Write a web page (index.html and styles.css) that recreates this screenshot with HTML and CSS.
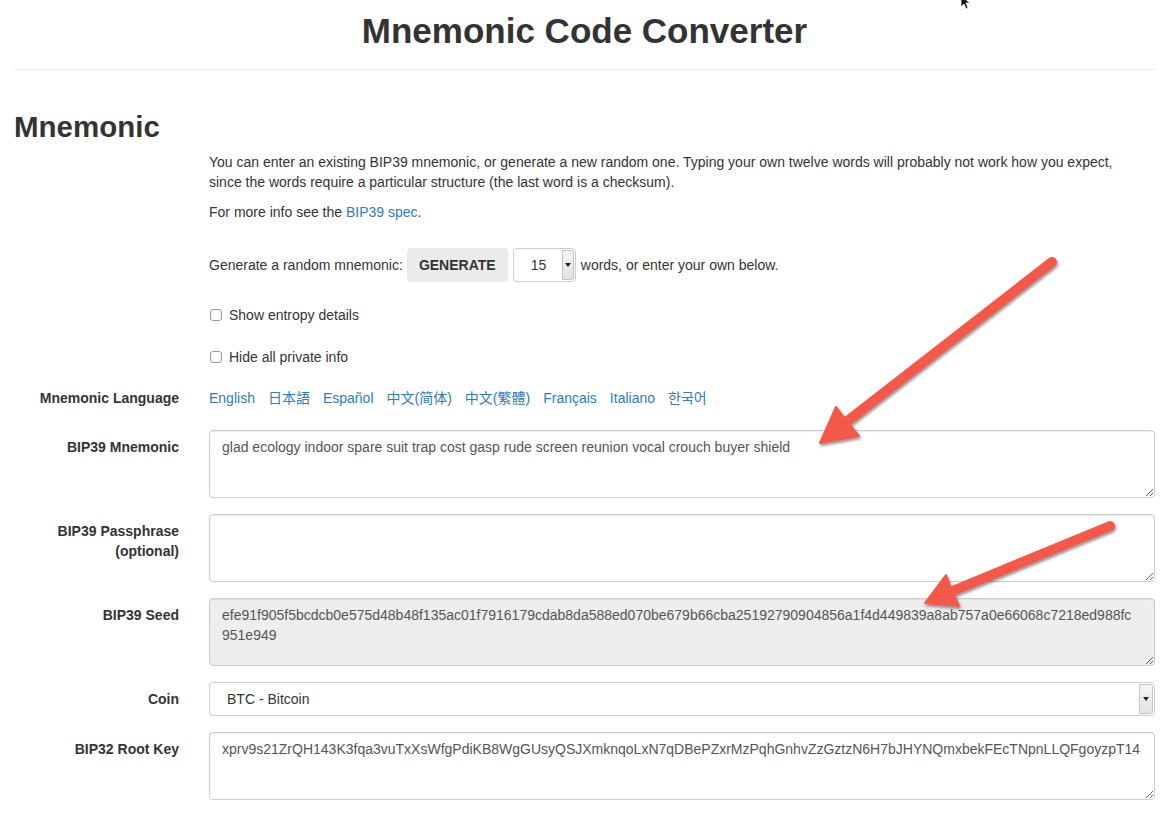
FILE: index.html
```html
<!DOCTYPE html>
<html lang="en">
<head>
<meta charset="utf-8">
<title>Mnemonic Code Converter</title>
<link rel="stylesheet" href="styles.css">
</head>
<body>
<div class="page">
  <h1 class="title">Mnemonic Code Converter</h1>
  <hr class="rule">
  <h2 class="section">Mnemonic</h2>

  <div class="form">
    <div class="row intro">
      <div></div>
      <div>
        <p class="p1">You can enter an existing BIP39 mnemonic, or generate a new random one. Typing your own twelve words will probably not work how you expect,<br>since the words require a particular structure (the last word is a checksum).</p>
        <p class="p2">For more info see the <a href="#">BIP39 spec</a>.</p>
      </div>
    </div>

    <div class="row gen-row">
      <div></div>
      <div class="gen">
        <span>Generate a random mnemonic:</span>
        <span class="btn">GENERATE</span>
        <span class="num-select"><span class="num-val">15</span><span class="drop"><span class="caret"></span></span></span>
        <span>words, or enter your own below.</span>
      </div>
    </div>

    <div class="row check-row first">
      <div></div>
      <label class="check"><span class="box"></span>Show entropy details</label>
    </div>

    <div class="row check-row">
      <div></div>
      <label class="check"><span class="box"></span>Hide all private info</label>
    </div>

    <div class="row lang-row">
      <div class="label flat">Mnemonic Language</div>
      <div class="langs">
        <a href="#">English</a>
        <a href="#">日本語</a>
        <a href="#">Español</a>
        <a href="#">中文(简体)</a>
        <a href="#">中文(繁體)</a>
        <a href="#">Français</a>
        <a href="#">Italiano</a>
        <a href="#">한국어</a>
      </div>
    </div>

    <div class="row field">
      <div class="label">BIP39 Mnemonic</div>
      <textarea class="area" readonly>glad ecology indoor spare suit trap cost gasp rude screen reunion vocal crouch buyer shield</textarea>
    </div>

    <div class="row field">
      <div class="label">BIP39 Passphrase<br>(optional)</div>
      <textarea class="area" readonly></textarea>
    </div>

    <div class="row field">
      <div class="label">BIP39 Seed</div>
      <textarea class="area ro" readonly>efe91f905f5bcdcb0e575d48b48f135ac01f7916179cdab8da588ed070be679b66cba25192790904856a1f4d449839a8ab757a0e66068c7218ed988fc
951e949</textarea>
    </div>

    <div class="row field">
      <div class="label">Coin</div>
      <div class="coin-select"><span class="coin-val">BTC - Bitcoin</span><span class="drop big"><span class="caret"></span></span></div>
    </div>

    <div class="row field">
      <div class="label">BIP32 Root Key</div>
      <textarea class="area" readonly>xprv9s21ZrQH143K3fqa3vuTxXsWfgPdiKB8WgGUsyQSJXmknqoLxN7qDBePZxrMzPqhGnhvZzGztzN6H7bJHYNQmxbekFEcTNpnLLQFgoyzpT14</textarea>
    </div>
  </div>
</div>

<svg class="arrows" width="1173" height="825" viewBox="0 0 1173 825" aria-hidden="true">
  <defs>
    <filter id="sh" x="-20%" y="-20%" width="140%" height="140%">
      <feDropShadow dx="1" dy="2" stdDeviation="1.5" flood-color="#000" flood-opacity="0.45"/>
    </filter>
  </defs>
  <g filter="url(#sh)" fill="#f4584a" stroke="#f4584a" stroke-linejoin="round">
    <line x1="1052" y1="262" x2="845" y2="423" stroke-width="10" stroke-linecap="round"/>
    <polygon points="820,443 836,407 847,421 859,436" stroke-width="2"/>
    <line x1="1110" y1="526" x2="950" y2="592" stroke-width="10" stroke-linecap="round"/>
    <polygon points="925,603 946,575 952,591 959,606" stroke-width="2"/>
  </g>
  <path d="M961 -4 L961 7 L964 4 L966 9 L968 8 L966 3 L970 3 Z" fill="#111" stroke="#fff" stroke-width="0.8"/>
</svg>
</body>
</html>
```

FILE: styles.css
```css
* { box-sizing: border-box; }

html, body {
  margin: 0;
  background: #fff;
}

body {
  position: relative;
  font-family: "Liberation Sans", Arial, "Noto Sans CJK SC", "Noto Sans CJK KR", sans-serif;
  font-size: 14px;
  line-height: 20px;
  color: #333;
  overflow: hidden;
  height: 825px;
}

a { color: #337ab7; text-decoration: none; }

.page {
  padding: 0 18px 0 14px;
}

.title {
  margin: 11px 0 0;
  text-align: center;
  font-size: 35px;
  line-height: 40px;
  font-weight: bold;
  color: #333;
}

.rule {
  margin: 18px 0 0;
  border: 0;
  border-top: 1px solid #eee;
  height: 0;
}

.section {
  margin: 40px 0 0;
  font-size: 29.5px;
  line-height: 33px;
  font-weight: bold;
  color: #333;
}

.form { margin-top: 9px; }

.row {
  display: grid;
  grid-template-columns: 165px 1fr;
  column-gap: 30px;
}

.intro { margin-bottom: 26px; }
.p1 { margin: 0 0 10px; }
.p2 { margin: 0; }

.gen-row { margin-bottom: 23px; }
.gen {
  display: flex;
  align-items: center;
  height: 34px;
}
.btn {
  display: inline-flex;
  align-items: center;
  justify-content: center;
  width: 101px;
  height: 34px;
  margin-left: 4px;
  background: #ebebeb;
  border-radius: 4px;
  font-weight: bold;
  color: #333;
}
.num-select {
  display: flex;
  align-items: center;
  justify-content: space-between;
  width: 63px;
  height: 34px;
  margin: 0 5px;
  border: 1px solid #ccc;
  border-radius: 4px;
  padding: 0 1px 0 17px;
  color: #333;
}
.drop {
  display: flex;
  align-items: center;
  justify-content: center;
  width: 12px;
  height: 30px;
  border: 1px solid #c4c4c4;
  border-radius: 0 3px 3px 0;
  background: linear-gradient(#f6f6f6, #e2e2e2);
}
.drop.big { width: 14px; }
.caret {
  width: 0;
  height: 0;
  border-left: 3px solid transparent;
  border-right: 3px solid transparent;
  border-top: 4px solid #222;
}

.check-row.first { margin-bottom: 22px; }
.check-row { margin-bottom: 21px; }
.check {
  display: flex;
  align-items: center;
}
.box {
  width: 12px;
  height: 12px;
  margin: 0 7px 0 1px;
  border: 1px solid #999;
  border-radius: 3px;
  background: #fff;
}

.lang-row { margin-bottom: 22px; }
.langs {
  display: flex;
  gap: 13px;
}

.label {
  padding-top: 7px;
  text-align: right;
  font-weight: bold;
  color: #333;
}
.label.flat { padding-top: 0; }

.field { margin-bottom: 16px; }

.area {
  display: block;
  width: 100%;
  height: 68px;
  margin: 0;
  padding: 6px 12px;
  border: 1px solid #ccc;
  border-radius: 4px;
  box-shadow: inset 0 1px 1px rgba(0,0,0,0.075);
  font: inherit;
  line-height: 20px;
  color: #555;
  background: #fff;
  outline: none;
}
.area.ro { background: #eee; }

.coin-select {
  display: flex;
  align-items: center;
  justify-content: space-between;
  height: 34px;
  border: 1px solid #ccc;
  border-radius: 4px;
  padding: 0 1px 0 17px;
  color: #333;
}

.arrows {
  position: absolute;
  left: 0;
  top: 0;
  pointer-events: none;
}
```
